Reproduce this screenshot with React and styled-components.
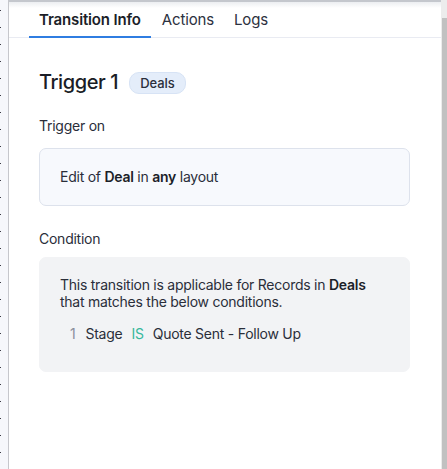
import React from "react";
import styled, { createGlobalStyle } from "styled-components";

const Global = createGlobalStyle`
  html, body { margin: 0; padding: 0; height: 100%; }
  body { font-family: Inter, "Noto Sans", sans-serif; color: #1f2330; background: #fff; overflow: hidden; letter-spacing: -0.25px; }
  #root { height: 100%; }
`;

const Frame = styled.div`
  display: flex;
  width: 447px;
  height: 469px;
  position: relative;
`;

const LeftStrip = styled.div`
  width: 8px;
  flex: none;
  background-color: #f6f7fb;
  background-image: radial-gradient(circle at 0.5px 0.5px, #3a3a44 0.9px, transparent 1px);
  background-size: 8px 17px;
  background-position: 0 10px;
  background-repeat: repeat-y;
  border-right: 1px solid #c6c7cc;
`;

const Panel = styled.div`
  flex: 1;
  display: flex;
  flex-direction: column;
  background: #fff;
  position: relative;
`;

const TopShade = styled.div`
  position: absolute;
  top: 0;
  left: 0;
  right: 0;
  height: 8px;
  background: linear-gradient(#c4c7cd 0, #c4c7cd 1.5px, #eceef1 2px, rgba(255,255,255,0) 8px);
`;

const Tabs = styled.div`
  display: flex;
  padding-left: 20px;
  height: 38px;
  border-bottom: 1px solid #e9ebf2;
  box-sizing: border-box;
`;

const Tab = styled.div`
  padding: 2px 10px 0;
  height: 38px;
  box-sizing: border-box;
  display: flex;
  align-items: center;
  font-size: 15px;
  letter-spacing: -0.15px;
  font-weight: ${p => (p.$active ? 600 : 400)};
  color: ${p => (p.$active ? "#1b1e28" : "#2c3140")};
  border-bottom: 2px solid ${p => (p.$active ? "#2f7de1" : "transparent")};
  margin-right: ${p => p.$mr || 0}px;
`;

const Content = styled.div`
  padding: 31px 31px 0 30px;
  display: flex;
  flex-direction: column;
`;

const TitleRow = styled.div`
  display: flex;
  align-items: center;
  gap: 10px;
  height: 26px;
`;

const Title = styled.h1`
  margin: 0;
  font-size: 20px;
  font-weight: 500;
  letter-spacing: -0.4px;
  color: #1a1d26;
`;

const Badge = styled.span`
  display: inline-flex;
  align-items: center;
  height: 20px;
  padding: 0 10px;
  border-radius: 10px;
  background: #e4edfa;
  border: 1px solid #d7e3f5;
  font-size: 13px;
  letter-spacing: -0.1px;
  font-weight: 500;
  color: #2b2f3b;
  margin-top: 2px;
  margin-left: 1px;
`;

const Label = styled.div`
  font-size: 14px;
  color: #2a2e3a;
  margin-top: ${p => p.$mt || 0}px;
  line-height: 17px;
`;

const Box = styled.div`
  margin-top: ${p => p.$mt || 0}px;
  border-radius: 7px;
  box-sizing: border-box;
  background: ${p => (p.$variant === "gray" ? "#f2f3f5" : "#f7f9fd")};
  border: 1px solid ${p => (p.$variant === "gray" ? "#f2f3f5" : "#dde2ec")};
  height: ${p => p.$h}px;
  padding: ${p => p.$pad};
  font-size: 14px;
  color: #2a2e3a;
  line-height: 17px;
`;

const B = styled.b`
  font-weight: 600;
  color: #1c1f29;
`;

const CondRow = styled.div`
  display: flex;
  gap: 9px;
  margin-top: 15px;
  padding-left: 10px;
`;

const Num = styled.span`
  color: #8a8f9c;
  margin-right: 1px;
`;

const Op = styled.span`
  color: #37b89c;
`;

const Scrollbar = styled.div`
  width: 6px;
  flex: none;
  background: #ececec;
  display: flex;
  flex-direction: column;
  align-items: flex-end;
`;

const Thumb = styled.div`
  margin-top: 18px;
  width: 5px;
  flex: 1;
  background: #c1c1c1;
`;

export default function App() {
  return (
    <>
      <Global />
      <Frame>
        <LeftStrip />
        <Panel>
          <TopShade />
          <Tabs>
            <Tab $active $mr={1}>Transition Info</Tab>
            <Tab>Actions</Tab>
            <Tab>Logs</Tab>
          </Tabs>
          <Content>
            <TitleRow>
              <Title>Trigger 1</Title>
              <Badge>Deals</Badge>
            </TitleRow>
            <Label $mt={22}>Trigger on</Label>
            <Box $mt={14} $h={58} $pad="19px 20px">
              Edit of <B>Deal</B> in <B>any</B> layout
            </Box>
            <Label $mt={24}>Condition</Label>
            <Box $mt={10} $variant="gray" $h={115} $pad="18px 20px">
              <div>This transition is applicable for Records in <B>Deals</B></div>
              <div>that matches the below conditions.</div>
              <CondRow>
                <Num>1</Num>
                <span>Stage</span>
                <Op>IS</Op>
                <span>Quote Sent - Follow Up</span>
              </CondRow>
            </Box>
          </Content>
        </Panel>
        <Scrollbar>
          <Thumb />
        </Scrollbar>
      </Frame>
    </>
  );
}
